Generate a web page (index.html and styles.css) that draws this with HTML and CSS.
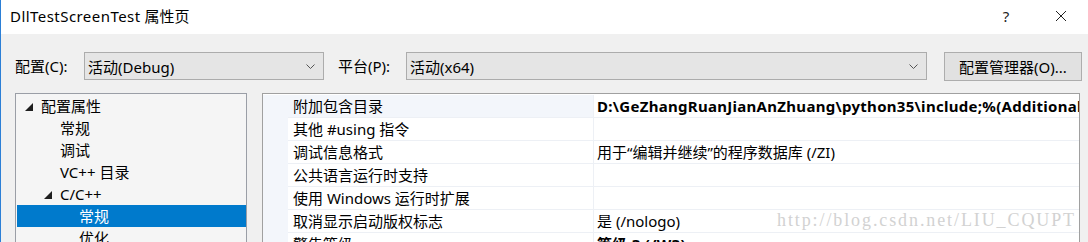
FILE: index.html
```html
<!DOCTYPE html>
<html lang="zh-CN">
<head>
<meta charset="utf-8">
<title>DllTestScreenTest 属性页</title>
<link rel="stylesheet" href="styles.css">
</head>
<body>
<div class="window">
  <div class="titlebar">
    <span class="title"><span class="title-latin">DllTestScreenTest</span> 属性页</span>
    <div class="tb-buttons">
      <span class="help">?</span>
      <svg class="close" width="12" height="12" viewBox="0 0 12 12"><path d="M1 1L11 11M11 1L1 11" stroke="#222" stroke-width="1" fill="none"/></svg>
    </div>
  </div>

  <div class="toolbar">
    <span class="lbl lbl-config">配置(C):</span>
    <div class="combo combo-config">
      <span class="combo-text">活动(Debug)</span>
      <svg class="chev" width="9" height="5" viewBox="0 0 9 5"><path d="M0.5 0.5L4.5 4.5L8.5 0.5" stroke="#555" stroke-width="1" fill="none"/></svg>
    </div>
    <span class="lbl lbl-platform">平台(P):</span>
    <div class="combo combo-platform">
      <span class="combo-text">活动(x64)</span>
      <svg class="chev" width="9" height="5" viewBox="0 0 9 5"><path d="M0.5 0.5L4.5 4.5L8.5 0.5" stroke="#555" stroke-width="1" fill="none"/></svg>
    </div>
    <button class="btn">配置管理器(O)...</button>
  </div>

  <div class="main">
    <div class="tree">
      <div class="node lv0"><span class="tri"></span><span>配置属性</span></div>
      <div class="node lv1"><span>常规</span></div>
      <div class="node lv1"><span>调试</span></div>
      <div class="node lv1"><span>VC++ 目录</span></div>
      <div class="node lv1 has-tri"><span class="tri"></span><span>C/C++</span></div>
      <div class="node lv2 selected"><span>常规</span></div>
      <div class="node lv2"><span>优化</span></div>
    </div>

    <div class="grid">
      <div class="row active"><div class="gutter"></div><div class="name">附加包含目录</div><div class="value bold">D:\GeZhangRuanJianAnZhuang\python35\include;%(AdditionalIncludeDirectories)</div></div>
      <div class="row"><div class="gutter"></div><div class="name">其他 #using 指令</div><div class="value"></div></div>
      <div class="row"><div class="gutter"></div><div class="name">调试信息格式</div><div class="value">用于“编辑并继续”的程序数据库 (/ZI)</div></div>
      <div class="row"><div class="gutter"></div><div class="name">公共语言运行时支持</div><div class="value"></div></div>
      <div class="row"><div class="gutter"></div><div class="name">使用 Windows 运行时扩展</div><div class="value"></div></div>
      <div class="row"><div class="gutter"></div><div class="name">取消显示启动版权标志</div><div class="value">是 (/nologo)</div></div>
      <div class="row"><div class="gutter"></div><div class="name">警告等级</div><div class="value bold">等级 3 (/W3)</div></div>
    </div>
  </div>

  <div class="watermark">http://blog.csdn.net/LIU_CQUPT</div>
</div>
</body>
</html>
```

FILE: styles.css
```css
html, body {
  margin: 0;
  padding: 0;
  width: 1088px;
  height: 242px;
  overflow: hidden;
}

body {
  font-family: "Noto Sans", "Noto Sans CJK SC", sans-serif;
  font-size: 15px;
  color: #000;
}

.window {
  position: relative;
  height: 242px;
  background: #f0f0f0;
  border-left: 1px solid #2b7fd6;
  overflow: hidden;
}

/* title bar */
.titlebar {
  height: 34px;
  background: #fff;
  display: flex;
  align-items: center;
  justify-content: space-between;
  padding-left: 9px;
}

.title {
  font-size: 15px;
  line-height: 20px;
  margin-top: -3px;
}

.title-latin {
  letter-spacing: 0.45px;
}

.tb-buttons {
  display: flex;
  align-items: center;
  margin-top: -2px;
}

.help {
  font-size: 15px;
  color: #222;
  width: 10px;
  text-align: center;
  margin-right: 44px;
}

.close {
  margin-right: 21px;
}

/* toolbar */
.toolbar {
  display: flex;
  align-items: center;
  padding: 18px 0 0 14px;
  height: 28px;
}

.lbl {
  line-height: 28px;
}

.lbl-config {
  width: 69px;
}

.lbl-platform {
  width: 68px;
  margin-left: 14px;
}

.combo {
  box-sizing: border-box;
  height: 28px;
  background: #e5e5e5;
  border: 1px solid #acacac;
  display: flex;
  align-items: center;
  justify-content: space-between;
  padding: 0 8px 0 3px;
}

.combo-config {
  width: 240px;
}

.combo-platform {
  width: 521px;
}

.chev {
  margin-top: 1px;
}

.btn {
  box-sizing: border-box;
  margin-left: 17px;
  width: 138px;
  height: 29px;
  background: #e1e1e1;
  border: 1px solid #adadad;
  font: inherit;
  color: #000;
  padding: 0;
}

/* main area */
.main {
  display: flex;
  gap: 15px;
  padding: 13px 8px 0 14px;
}

.tree {
  box-sizing: border-box;
  width: 232px;
  height: 200px;
  background: #f5f5f5;
  border: 1px solid #9a9ea6;
  padding: 1px 0 0 1px;
}

.node {
  height: 22px;
  line-height: 22px;
  display: flex;
  align-items: center;
  white-space: nowrap;
}

.node.lv0 { padding-left: 8px; }
.node.lv1 { padding-left: 43px; }
.node.lv1.has-tri { padding-left: 27px; }
.node.lv2 { padding-left: 62px; }

.tri {
  width: 0;
  height: 0;
  border-style: solid;
  border-width: 0 0 8px 8px;
  border-color: transparent transparent #1e1e1e transparent;
  margin-right: 8px;
  margin-top: 1px;
}

.node.selected {
  background: #007acc;
  color: #fff;
}

.grid {
  box-sizing: border-box;
  flex: 1;
  height: 200px;
  background: #fff;
  border: 1px solid #a0a0a0;
  padding-top: 1px;
}

.row {
  display: grid;
  grid-template-columns: 25px 305px 1fr;
  height: 23px;
}

.gutter {
  background: #f3f6fb;
}

.name, .value {
  box-sizing: border-box;
  height: 23px;
  line-height: 22px;
  border-bottom: 1px solid #edf0f5;
  white-space: nowrap;
  overflow: hidden;
}

.name {
  padding-left: 5px;
}

.value {
  border-left: 1px solid #edf0f5;
  padding-left: 3px;
}

.row.active .name {
  background: #f3f6fb;
}

.bold {
  font-weight: bold;
  letter-spacing: 0.29px;
}

.watermark {
  position: absolute;
  left: 776px;
  top: 210px;
  font-family: "Liberation Serif", serif;
  font-size: 18px;
  letter-spacing: 1.9px;
  color: #d2d2d2;
  white-space: nowrap;
}
```
